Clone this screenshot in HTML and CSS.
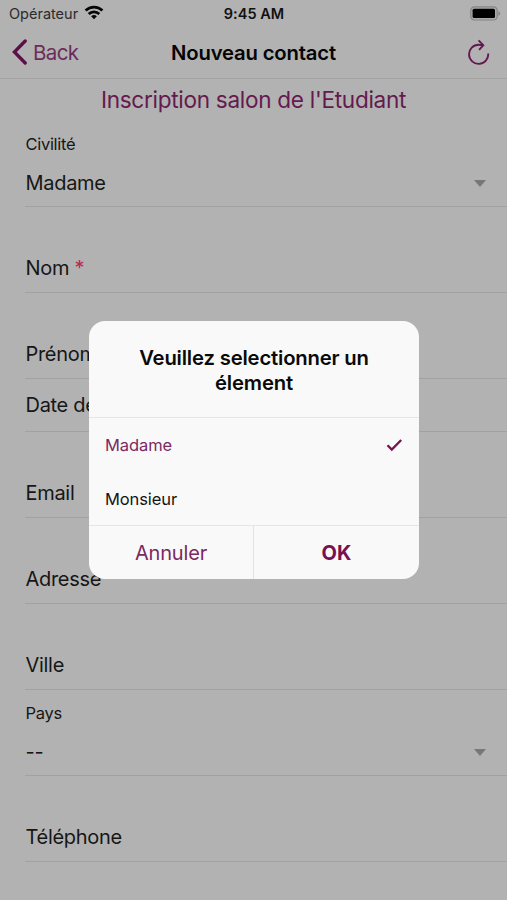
FILE: index.html
```html
<!DOCTYPE html>
<html lang="fr">
<head>
<meta charset="utf-8">
<title>Nouveau contact</title>
<link rel="stylesheet" href="styles.css">
</head>
<body>
<header>
  <div class="status">
    <div class="carrier"><span>Opérateur</span>
      <svg width="20" height="15" viewBox="0 0 20 15"><g fill="none" stroke="#050505" stroke-width="2.7"><path d="M1.6 5.5a12 12 0 0 1 16.8 0"/><path d="M4.7 9a7.6 7.6 0 0 1 10.6 0"/></g><path d="M7.1 11.3a4.2 4.2 0 0 1 5.8 0L10 14.2z" fill="#050505"/></svg>
    </div>
    <span class="time">9:45 AM</span>
    <svg class="battery" width="31" height="15" viewBox="0 0 31 15"><rect x=".8" y=".8" width="26.4" height="13.2" rx="3.6" fill="#aaa" stroke="#858585" stroke-width="1.2"/><rect x="2.6" y="2.7" width="22.4" height="9.4" rx="1.5" fill="#000"/><path d="M28.5 5v5q1.6-1 1.6-2.5T28.5 5" fill="#808080"/></svg>
  </div>
  <div class="nav">
    <div class="back"><svg width="16" height="26" viewBox="0 0 16 26"><path d="M14.2 2 3.4 13l10.8 11" fill="none" stroke="#5b0f48" stroke-width="3.3" stroke-linecap="round"/></svg><span>Back</span></div>
    <h1>Nouveau contact</h1>
    <svg class="reload" width="24" height="26" viewBox="0 0 24 26"><path d="M21.2 14.5a9.6 9.6 0 1 1-9.6-8.8q2.4 0 4.2.6M11.6 1.4l4.7 4.8-4.2 4.6" fill="none" stroke="#641850" stroke-width="1.9"/></svg>
  </div>
</header>
<main>
  <h2>Inscription salon de l'Etudiant</h2>
  <div class="field select first"><small>Civilité</small><div class="value"><span class="madame">Madame</span><i></i></div></div>
  <div class="field"><span>Nom <b>*</b></span></div>
  <div class="field"><span>Prénom</span></div>
  <div class="field date"><span>Date de</span></div>
  <div class="field"><span>Email</span></div>
  <div class="field"><span>Adresse</span></div>
  <div class="field"><span>Ville</span></div>
  <div class="field select"><small>Pays</small><div class="value"><span class="dashes">--</span><i></i></div></div>
  <div class="field"><span>Téléphone</span></div>
</main>
<section class="dialog">
  <h3>Veuillez selectionner un<br>élement</h3>
  <div class="options">
    <div class="option selected"><span>Madame</span><svg width="17" height="14" viewBox="0 0 17 14"><path d="m1.5 7.2 4.3 4.4L15.2 2" fill="none" stroke="#771253" stroke-width="2.3"/></svg></div>
    <div class="option"><span>Monsieur</span></div>
  </div>
  <div class="actions"><button>Annuler</button><button class="ok">OK</button></div>
</section>
</body>
</html>
```
FILE: styles.css
```css
* { box-sizing: border-box; }
body { margin: 0; height: 900px; overflow: hidden; background: #b2b2b2; color: #161616; font-family: Inter, "Liberation Sans", sans-serif; }
svg { display: block; flex: none; }
h1, h2, h3 { margin: 0; }
header { height: 79px; border-bottom: 1px solid #a3a3a3; }
.status { display: grid; grid-template-columns: 1fr auto 1fr; align-items: center; height: 27px; padding: 0 6px 0 9px; font-size: 14.5px; }
.carrier { display: flex; align-items: center; gap: 6px; letter-spacing: 0; color: #2b2b2b; }
.carrier svg { margin-top: -2px; }
.time { font-weight: 600; color: #111; letter-spacing: .05px; margin-left: -2px; }
.battery { justify-self: end; }
.nav { display: grid; grid-template-columns: 1fr auto 1fr; align-items: center; height: 50px; padding: 0 16px; padding-left: 11px; }
.back { display: flex; align-items: center; gap: 6px; color: #6d2c5a; font-size: 20.5px; letter-spacing: -.6px; }
h1 { margin-right: -5px; font-size: 20.3px; font-weight: 600; color: #050505; letter-spacing: -.18px; padding-top: 1px; }
.reload { justify-self: end; }
h2 { height: 43px; padding-top: 6px; line-height: 30px; text-align: center; font-size: 22.6px; font-weight: 400; color: #641a4e; letter-spacing: -.3px; }
.field { display: flex; flex-direction: column; justify-content: flex-end; height: 86px; margin-left: 25px; padding: 0 0 11px .5px; border-bottom: 1px solid #a1a1a1; font-size: 20px; line-height: 25px; letter-spacing: -.3px; }
.first { height: 85px; }
.date { height: 53px; padding-bottom: 13px; }
.field b { margin-left: 0; color: #b82a50; font-weight: 400; }
.select { justify-content: flex-start; padding: 12px 21px 0 .5px; }
.select small { font-size: 16.5px; line-height: 22px; }
.first small { margin-top: -1px; }
.value { display: flex; justify-content: space-between; align-items: center; margin-top: 16px; }
.value i { width: 12px; height: 7px; background: #777; clip-path: polygon(0 0, 100% 0, 50% 100%); }
.dialog { position: absolute; left: 89px; top: 321px; width: 330px; height: 258px; border-radius: 16px; overflow: hidden; background: #f9f9f9; }
h3 { height: 97px; padding-top: 25px; text-align: center; font-size: 20.3px; line-height: 24.5px; font-weight: 600; letter-spacing: -.18px; color: #0a0a0a; border-bottom: 1px solid #e6e6e6; }
.options { height: 108px; border-bottom: 1px solid #e6e6e6; }
.option { display: flex; justify-content: space-between; align-items: center; height: 54px; padding: 0 16px; font-size: 16.5px; letter-spacing: -.1px; color: #151515; }
.selected { color: #7b2961; }
.actions { display: grid; grid-template-columns: 165px 1fr; height: 53px; }
.actions button { border: 0; background: none; font: 400 20px/24px Inter, "Liberation Sans", sans-serif; letter-spacing: -.15px; color: #7b2961; padding: 0; }
.actions button:first-child { border-right: 1px solid #e3e3e3; }
.actions .ok { font-weight: 700; color: #751252; letter-spacing: 0; }
```
